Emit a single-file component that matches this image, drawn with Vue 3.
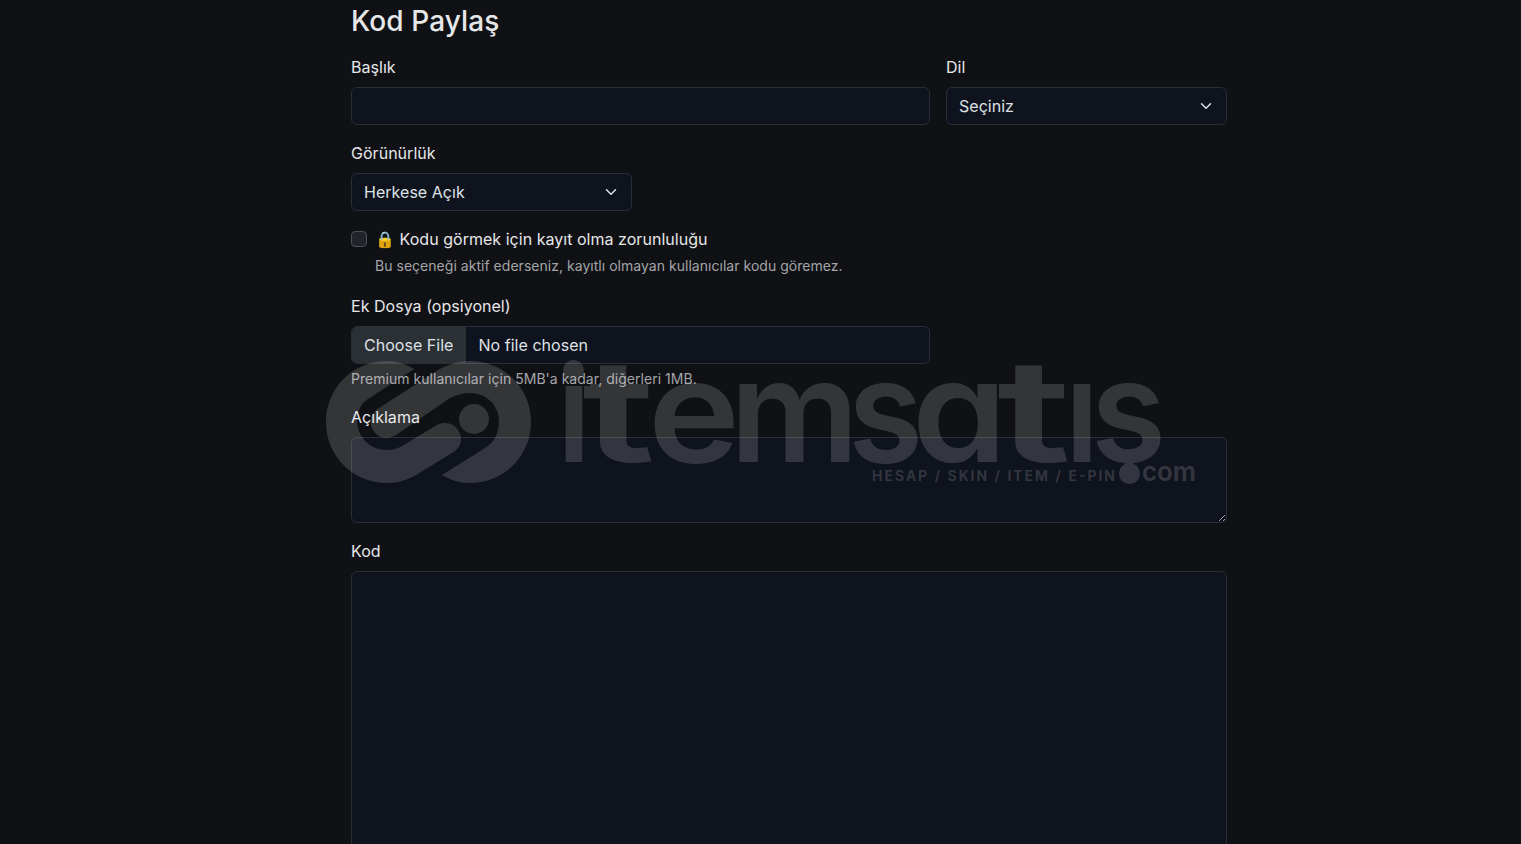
<template>
  <main class="page">
    <form class="share-form" @submit.prevent>
      <h2>Kod Paylaş</h2>
      <div class="row">
        <div class="col-8">
          <label for="title">Başlık</label>
          <input id="title" v-model="form.title" class="control" type="text">
        </div>
        <div class="col-4">
          <label for="lang">Dil</label>
          <div class="select-wrap">
            <select id="lang" v-model="form.lang" class="control">
              <option value="">Seçiniz</option>
            </select>
            <svg class="chevron" viewBox="0 0 16 16"><path d="m2 5 6 6 6-6" /></svg>
          </div>
        </div>
      </div>
      <div class="row">
        <div class="col-4">
          <label for="visibility">Görünürlük</label>
          <div class="select-wrap">
            <select id="visibility" v-model="form.visibility" class="control">
              <option value="public">Herkese Açık</option>
            </select>
            <svg class="chevron" viewBox="0 0 16 16"><path d="m2 5 6 6 6-6" /></svg>
          </div>
        </div>
      </div>
      <div class="check">
        <input id="members" v-model="form.membersOnly" type="checkbox">
        <div>
          <label for="members">🔒 Kodu görmek için kayıt olma zorunluluğu</label>
          <p class="hint">Bu seçeneği aktif ederseniz, kayıtlı olmayan kullanıcılar kodu göremez.</p>
        </div>
      </div>
      <div class="row">
        <div class="col-8 file-col">
          <label>Ek Dosya (opsiyonel)</label>
          <div class="file control">
            <span class="file-btn">Choose File</span>
            <span class="file-name">No file chosen</span>
          </div>
          <p class="hint">Premium kullanıcılar için 5MB'a kadar, diğerleri 1MB.</p>
        </div>
      </div>
      <div class="field">
        <label for="desc">Açıklama</label>
        <textarea id="desc" v-model="form.description" class="control desc"></textarea>
      </div>
      <div class="field">
        <label for="code">Kod</label>
        <textarea id="code" v-model="form.code" class="control code"></textarea>
      </div>
    </form>

    <svg class="watermark" viewBox="320 350 890 150" aria-hidden="true">
      <defs>
        <!-- the round dots of i and ş are separate circles -->
        <clipPath id="brand-clip"><path d="M550 386H590V355H1175V465H550Z" /></clipPath>
      </defs>
      <g>
        <path d="M414 369C406 364 397 361 387 361C353 361 326 388 326 422C326 456 353 483 387 483C401 483 412 478 421 472L455 451C461 446 463 439 459 432C455 423 445 421 437 425L402 446C397 449 392 450 387 450C370 450 357 437 357 420C357 410 362 402 371 397Z" />
        <path d="M442 475C450 480 460 483 470 483C504 483 531 456 531 422C531 388 504 361 470 361C456 361 444 366 435 372L379 408C371 413 368 422 373 430C377 438 388 440 396 435L450 398C456 395 463 393 470 393C486 393 499 405 499 421C499 433 494 443 485 448Z" />
        <circle cx="474" cy="419" r="15" />
      </g>
      <circle cx="573.5" cy="370.5" r="10.5" />
      <g clip-path="url(#brand-clip)">
        <text class="brand" y="462"><tspan v-for="(g, i) in brand" :key="i" :x="g.x" :textLength="g.w" lengthAdjust="spacingAndGlyphs">{{ g.ch }}</tspan></text>
      </g>
      <text class="tagline" x="872" y="481" textLength="243">HESAP / SKIN / ITEM / E-PIN</text>
      <circle cx="1129.5" cy="473.5" r="10.5" />
      <text class="domain" x="1142" y="481" textLength="54" lengthAdjust="spacingAndGlyphs">com</text>
    </svg>
  </main>
</template>

<script setup>
import { reactive } from 'vue'
const form = reactive({
  title: '',
  lang: '',
  visibility: 'public',
  membersOnly: false,
  description: '',
  code: ''
})
// x = glyph start, w = advance width
const brand = [
  { ch: 'i', x: 557, w: 34 },
  { ch: 't', x: 582, w: 73 },
  { ch: 'e', x: 648, w: 92 },
  { ch: 'm', x: 730, w: 129 },
  { ch: 's', x: 848, w: 75 },
  { ch: 'a', x: 912, w: 95 },
  { ch: 't', x: 997, w: 74 },
  { ch: 'ı', x: 1065, w: 34 },
  { ch: 'ş', x: 1091, w: 75 }
]
</script>

<style>
body{background:#101114;overflow:hidden}
</style>

<style scoped>
.page{position:relative;height:844px;overflow:hidden;color:#e6e7e9;font:400 16px/24px Inter,"Noto Sans",sans-serif;letter-spacing:.03px}
.page *{box-sizing:border-box}
.share-form{width:876px;margin-left:351px;padding-top:4px}
h2{margin:0 0 17px;font-size:28px;font-weight:500;line-height:34px;letter-spacing:.1px}
p{margin:0}
label{display:block;margin-bottom:8px}
.row{display:flex;gap:16px;margin-bottom:16px}
.col-8{width:579px}
.col-4{width:281px}
.control{display:block;width:100%;height:38px;margin:0;padding:6px 12px;border:1px solid #2a2e38;border-radius:6px;background:#0f131e;color:#dee2e6;font:inherit;letter-spacing:inherit;outline:0;appearance:none}
.select-wrap{position:relative}
.chevron{position:absolute;right:13px;top:11px;width:16px;height:16px;pointer-events:none;fill:none;stroke:#dee2e6;stroke-width:2;stroke-linecap:round;stroke-linejoin:round;transform:scale(.75)}
.check{display:flex;gap:8px;margin-bottom:18px}
.check input{appearance:none;flex:0 0 auto;width:16px;height:16px;margin:4px 0 0;border:1px solid #495057;border-radius:4px;background:#212529}
.check label{margin:0}
.check .hint{margin-top:4px}
.hint{color:#a3a5a9;font-size:14px;line-height:21px}
.file{display:flex;padding:0;overflow:hidden}
.file-btn{width:114px;padding:6px 12px;background:#2b3035}
.file-name{padding:6px 12.5px}
.file-col .hint{margin-top:4px}
.field{margin-bottom:16px}
textarea.control{resize:vertical}
.desc{height:86px}
.code{height:400px}
.watermark{position:absolute;left:320px;top:350px;width:890px;height:150px;fill:#fff;opacity:.15;pointer-events:none;letter-spacing:0}
.brand{font-size:143px;font-weight:600;font-feature-settings:"cv11"}
.tagline{font-size:14px;font-weight:600}
.domain{font-size:27px;font-weight:600}
</style>
